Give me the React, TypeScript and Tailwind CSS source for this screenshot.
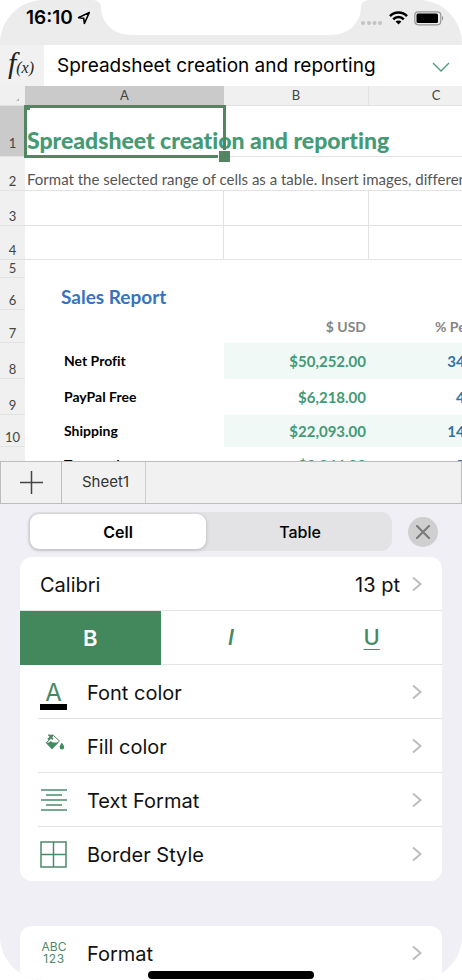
import React from "react";

const sans = "font-['Inter','Liberation_Sans',sans-serif]";
const sheetFont = "font-['Lato','Open_Sans',sans-serif] [font-variant-ligatures:none]";

type Row = {
  n: number;
  height: string;
  label?: string;
  usd?: string;
  percent?: string;
  shaded?: boolean;
};

const salesRows: Row[] = [
  { n: 8, height: "h-9", label: "Net Profit", usd: "$50,252.00", percent: "34%", shaded: true },
  { n: 9, height: "h-9", label: "PayPal Free", usd: "$6,218.00", percent: "4%" },
  { n: 10, height: "h-8", label: "Shipping", usd: "$22,093.00", percent: "14%", shaded: true },
];

function RowHeader({ n, active }: { n?: number; active?: boolean }) {
  return (
    <th
      scope="row"
      className={`border-b border-[#e2e2e2] p-0 text-center align-bottom text-[13px] leading-4 font-normal text-[#444] ${
        active ? "bg-[#cacaca] pb-[5px]" : "bg-[#f0f0f0] pb-px"
      }`}
    >
      {n}
    </th>
  );
}

function StatusBar() {
  return (
    <header className="relative flex h-[45px] items-start justify-between bg-[#ececec] pr-[18px] pl-[26px]">
      <svg
        className="absolute top-0 left-1/2 h-[35px] w-[278px] -translate-x-1/2"
        viewBox="0 0 278 35"
        aria-hidden="true"
      >
        <path
          fill="#fff"
          d="M0 0 C6 0 9 3 9 8 C10 24 22 35 40 35 H238 C256 35 268 24 269 8 C269 3 272 0 278 0 Z"
        />
      </svg>
      <div className="flex items-center gap-1 pt-[6px]">
        <span className="text-[19px] leading-6 font-semibold text-black">16:10</span>
        <svg className="size-[14px]" viewBox="0 0 14 14" aria-label="Location">
          <path
            d="M12.3 1.5 L1.5 6.6 L6.7 7.2 L7.4 12.5 Z"
            fill="none"
            stroke="#000"
            strokeWidth="1.6"
            strokeLinejoin="round"
          />
        </svg>
      </div>
      <div className="flex items-center gap-[6px] pt-[10px]">
        <svg className="h-4 w-[22px]" viewBox="0 0 22 16" aria-label="No signal">
          <g fill="#c3c3c3">
            <circle cx="2" cy="13" r="2" />
            <circle cx="8" cy="13" r="2" />
            <circle cx="13.500" cy="13" r="2" />
            <circle cx="19" cy="13" r="2" />
          </g>
        </svg>
        <svg className="h-4 w-[19px]" viewBox="0 0 19 16" aria-label="Wi-Fi">
          <g fill="none" stroke="#000" strokeWidth="2.500">
            <path d="M1 6.200 C5.600 1.300 13.400 1.300 18 6.200" />
            <path d="M4.200 9.400 C7 6.300 12 6.300 14.800 9.400" />
          </g>
          <path d="M9.500 14.600 L6.600 11.500 C8.200 10 10.800 10 12.400 11.500 Z" />
        </svg>
        <svg className="h-4 w-[30px]" viewBox="0 0 30 16" aria-label="Battery full">
          <rect x="0.800" y="1.800" width="26" height="13" rx="3.500" fill="none" stroke="#969696" strokeWidth="1.200" />
          <rect x="2.500" y="3.500" width="21.500" height="9.500" rx="1.500" />
          <path d="M28 6 C29.500 6.500 29.500 10 28 10.500 Z" fill="#969696" />
        </svg>
      </div>
    </header>
  );
}

function FormulaBar() {
  return (
    <div className="flex h-[41px] items-center bg-white">
      <label
        htmlFor="formula"
        className="flex h-full w-11 items-baseline justify-center bg-[#f1f1f1] pr-[2px] font-['Liberation_Serif',serif] text-[#222] italic"
      >
        <span className="text-[30px] leading-9">f</span>
        <span className="text-[16px] leading-9">(x)</span>
      </label>
      <input
        id="formula"
        defaultValue="Spreadsheet creation and reporting"
        className="h-full min-w-0 flex-1 pl-[13px] text-[19px] text-black outline-none"
      />
      <button type="button" aria-label="Expand formula bar" className="flex h-full w-[42px] items-center justify-center">
        <svg className="mt-[2px] h-[10px] w-[18px]" viewBox="0 0 18 10">
          <path d="M1 1 L9 9 L17 1" fill="none" stroke="#4c9b79" strokeWidth="1.300" />
        </svg>
      </button>
    </div>
  );
}

function Spreadsheet() {
  const gridCell = "border-b border-[#e2e2e2] p-0";
  return (
    <div className={`overflow-hidden bg-white ${sheetFont}`}>
      <table className="w-[503px] table-fixed border-separate border-spacing-0">
        <colgroup>
          <col className="w-[25px]" />
          <col className="w-[199px]" />
          <col className="w-[145px]" />
          <col className="w-[134px]" />
        </colgroup>
        <thead>
          <tr className="h-5 bg-[#f0f0f0] text-[13px] leading-4 text-[#444]">
            <td className="border-b border-[#e2e2e2] p-0">
              <svg className="mt-2 ml-4 size-[3px]" viewBox="0 0 3 3" aria-hidden="true">
                <path d="M3 0 V3 H0 Z" fill="#bbb" />
              </svg>
            </td>
            <th scope="col" className="bg-[#cacaca] p-0 pb-[2px] font-normal">A</th>
            <th scope="col" className="border-r border-b border-[#e2e2e2] p-0 pb-px font-normal">B</th>
            <th scope="col" className="border-b border-[#e2e2e2] p-0 pb-px font-normal">C</th>
          </tr>
        </thead>
        <tbody>
          <tr className="h-[51px]">
            <RowHeader n={1} active />
            <td colSpan={3} className="relative border-b border-[#e2e2e2] p-0 pb-1 pl-[2px] align-bottom">
              <p className="text-[23px] leading-6 font-black whitespace-nowrap text-[#439a74]">
                Spreadsheet creation and reporting
              </p>
              <span className="absolute -top-px -left-px h-[53px] w-[202px] border-[3px] border-[#528562]">
                <span className="absolute top-0 left-0 h-[2px] w-[3px] bg-[#528562]" />
                <span className="absolute -right-[7px] -bottom-[7px] size-3 border-t border-l border-white bg-[#528562]" />
              </span>
            </td>
          </tr>
          <tr className="h-[34px]">
            <RowHeader n={2} />
            <td colSpan={3} className={`${gridCell} pb-[2px] pl-[2px] align-bottom`}>
              <p className="text-[15px] leading-[18px] whitespace-nowrap text-[#555]">
                Format the selected range of cells as a table. Insert images, different
              </p>
            </td>
          </tr>
          {[3, 4].map((n) => (
            <tr key={n} className={n === 3 ? "h-[35px]" : "h-[34px]"}>
              <RowHeader n={n} />
              <td className={`${gridCell} border-r`} />
              <td className={`${gridCell} border-r`} />
              <td className={gridCell} />
            </tr>
          ))}
          <tr className="h-[18px]">
            <RowHeader n={5} />
            <td colSpan={3} className="p-0" />
          </tr>
          <tr className="h-8">
            <RowHeader n={6} />
            <td colSpan={3} className="p-0 pl-9 align-bottom">
              <h2 className="text-[19px] leading-[26px] font-bold text-[#3574c0]">Sales Report</h2>
            </td>
          </tr>
          <tr className="h-[33px] text-[14px] leading-4 font-bold text-[#858585]">
            <RowHeader n={7} />
            <td className="p-0" />
            <td className="p-0 pr-[3px] text-right">$ USD</td>
            <td className="p-0 pl-[66px] whitespace-nowrap">% Per</td>
          </tr>
          {salesRows.map((row) => (
            <tr key={row.n} className={`${row.height} text-[14px] leading-4 font-bold`}>
              <RowHeader n={row.n} />
              <td className="p-0 pl-[39px] text-black">{row.label}</td>
              <td className={`p-0 pr-[3px] text-right text-[15px] text-[#439a74] ${row.shaded ? "bg-[#f1f9f7]" : ""}`}>
                {row.usd}
              </td>
              <td className={`p-0 pr-[26px] text-right text-[15px] text-[#3273a8] ${row.shaded ? "bg-[#f1f9f7]" : ""}`}>
                {row.percent}
              </td>
            </tr>
          ))}
          <tr className="text-[14px] leading-4 font-bold">
            <td className="bg-[#f0f0f0] p-0" />
            <td className="p-0 pl-[39px] text-black">
              <div className="h-[14px] overflow-hidden pt-[10px]">Transaction costs</div>
            </td>
            <td className="p-0 pr-[3px] text-right text-[15px] text-[#439a74]">
              <div className="h-[14px] overflow-hidden pt-[10px]">$3,244.00</div>
            </td>
            <td className="p-0 pr-[26px] text-right text-[15px] text-[#3273a8]">
              <div className="h-[14px] overflow-hidden pt-[10px]">5%</div>
            </td>
          </tr>
        </tbody>
      </table>
    </div>
  );
}

function SheetTabs() {
  return (
    <nav className="flex h-[43px] border border-[#bdbdbd] bg-[#f1f1f1]" aria-label="Sheets">
      <button
        type="button"
        aria-label="Add sheet"
        className="flex w-[61px] items-center justify-center border-r border-[#bdbdbd]"
      >
        <svg className="size-[23px]" viewBox="0 0 23 23">
          <path d="M11.500 0 V23 M0 11.500 H23" stroke="#444" strokeWidth="1.500" />
        </svg>
      </button>
      <button type="button" className="w-[84px] border-r border-[#cfcfcf] pl-1 text-[15px] text-[#333]">
        Sheet1
      </button>
    </nav>
  );
}

function Chevron() {
  return (
    <svg className="mr-5 h-4 w-[10px]" viewBox="0 0 10 16" aria-hidden="true">
      <path d="M1 1.500 L8.500 8 L1 14.500" fill="none" stroke="#bdbdbf" strokeWidth="2" />
    </svg>
  );
}

function OptionRow({ icon, label, last }: { icon: React.ReactNode; label: string; last?: boolean }) {
  return (
    <button type="button" className="flex h-[54px] w-full pl-[18px] text-left text-[20px] text-[#111]">
      <span className={`flex h-full flex-1 items-center ${last ? "" : "border-b border-[#e3e3e6]"}`}>
        <span className="flex w-[49px] justify-start pl-[2px]">{icon}</span>
        <span className="flex-1 pt-[2px]">{label}</span>
        <Chevron />
      </span>
    </button>
  );
}

const fontColorIcon = (
  <span className="mt-[9px] flex w-[27px] flex-col items-center">
    <span className="text-[24px] leading-[22px] text-[#438a63]">A</span>
    <span className="h-[6px] w-full bg-black" />
  </span>
);

const fillColorIcon = (
  <svg className="mb-[6px] ml-[5px] h-[17px] w-5" viewBox="0 0 20 17" aria-hidden="true">
    <path d="M3 1 L8.500 1.500 L14.500 7 L7 14 L1.500 8.500 L7.500 3" fill="none" stroke="#5b7c6b" strokeWidth="1" />
    <path d="M3 5.500 L8 1 M4 1 L8 5.500" stroke="#438a63" strokeWidth="1.800" />
    <path d="M0.500 8.500 H4 L5.500 7 L8 8.500 H13.500 L7 15.500 Z" fill="#438a63" />
    <path d="M16.800 8.500 C18.300 11 19.200 12 19.200 13.200 A2.300 2.300 0 0 1 14.600 13.200 C14.600 12 15.500 11 16.800 8.500 Z" fill="#438a63" />
  </svg>
);

const textFormatIcon = (
  <svg className="ml-px h-[22px] w-[26px]" viewBox="0 0 26 22" aria-hidden="true">
    <path
      d="M0 1 H26 M5 6 H21 M0 11 H26 M5 16 H21 M0 21 H26"
      stroke="#4b8a6a"
      strokeWidth="1.400"
    />
  </svg>
);

const borderIcon = (
  <svg className="size-[27px]" viewBox="0 0 27 27" aria-hidden="true">
    <path d="M1 1 H26 V26 H1 Z M13.500 1 V26 M1 13.500 H26" fill="none" stroke="#4b8a6a" strokeWidth="1.500" />
  </svg>
);

const numberFormatIcon = (
  <span className="ml-px flex w-[26px] flex-col items-center text-[12px] leading-3 text-[#4b8a6a]">
    <span>ABC</span>
    <span className="tracking-wider">123</span>
  </span>
);

function FormatPanel() {
  return (
    <main className="bg-[#f0eff5]">
      <div className="flex items-center gap-4 pt-2 pr-6 pl-7">
        <div className="grid h-[39px] flex-1 grid-cols-[176px_1fr] rounded-[11px] bg-[#e3e3e6] p-[2px]">
          <button
            type="button"
            aria-pressed="true"
            className="rounded-[9px] bg-white text-[16px] font-semibold text-black shadow-[0_1px_4px_rgba(0,0,0,0.2)]"
          >
            Cell
          </button>
          <button type="button" aria-pressed="false" className="pl-1 text-[16px] font-medium text-black">
            Table
          </button>
        </div>
        <button
          type="button"
          aria-label="Close"
          className="flex size-[30px] items-center justify-center rounded-full bg-[#cfcfcf]"
        >
          <svg className="size-[14px]" viewBox="0 0 14 14">
            <path d="M1 1 L13 13 M13 1 L1 13" stroke="#7c7c7e" strokeWidth="2.200" strokeLinecap="round" />
          </svg>
        </button>
      </div>

      <section className="mx-5 mt-[6px] overflow-hidden rounded-[12px] bg-white">
        <button
          type="button"
          className="flex h-[54px] w-full items-center border-b border-[#e3e3e6] pl-5 text-[20px] text-[#111]"
        >
          <span className="pt-[2px]">Calibri</span>
          <span className="mr-3 ml-auto pt-[2px]">13 pt</span>
          <Chevron />
        </button>
        <div className="grid h-[54px] grid-cols-3 text-[22px] text-[#438a63]">
          <button type="button" aria-label="Bold" aria-pressed="true" className="bg-[#43875d] font-semibold text-white">
            B
          </button>
          <button
            type="button"
            aria-label="Italic"
            className="border-b border-[#e3e3e6] font-['Roboto','Liberation_Sans',sans-serif] font-medium italic"
          >
            I
          </button>
          <button
            type="button"
            aria-label="Underline"
            className="border-b border-[#e3e3e6] font-medium underline decoration-1 underline-offset-4"
          >
            U
          </button>
        </div>
        <OptionRow icon={fontColorIcon} label="Font color" />
        <OptionRow icon={fillColorIcon} label="Fill color" />
        <OptionRow icon={textFormatIcon} label="Text Format" />
        <OptionRow icon={borderIcon} label="Border Style" last />
      </section>

      <section className="mx-5 mt-[45px] overflow-hidden rounded-t-[12px] bg-white">
        <OptionRow icon={numberFormatIcon} label="Format" last />
      </section>
    </main>
  );
}

export default function App() {
  return (
    <div className={`relative overflow-hidden rounded-[44px] bg-[#f0eff5] ${sans}`}>
      <StatusBar />
      <FormulaBar />
      <Spreadsheet />
      <SheetTabs />
      <FormatPanel />
      <div className="absolute bottom-px left-1/2 h-2 w-[166px] -translate-x-1/2 rounded-full bg-black" />
    </div>
  );
}
